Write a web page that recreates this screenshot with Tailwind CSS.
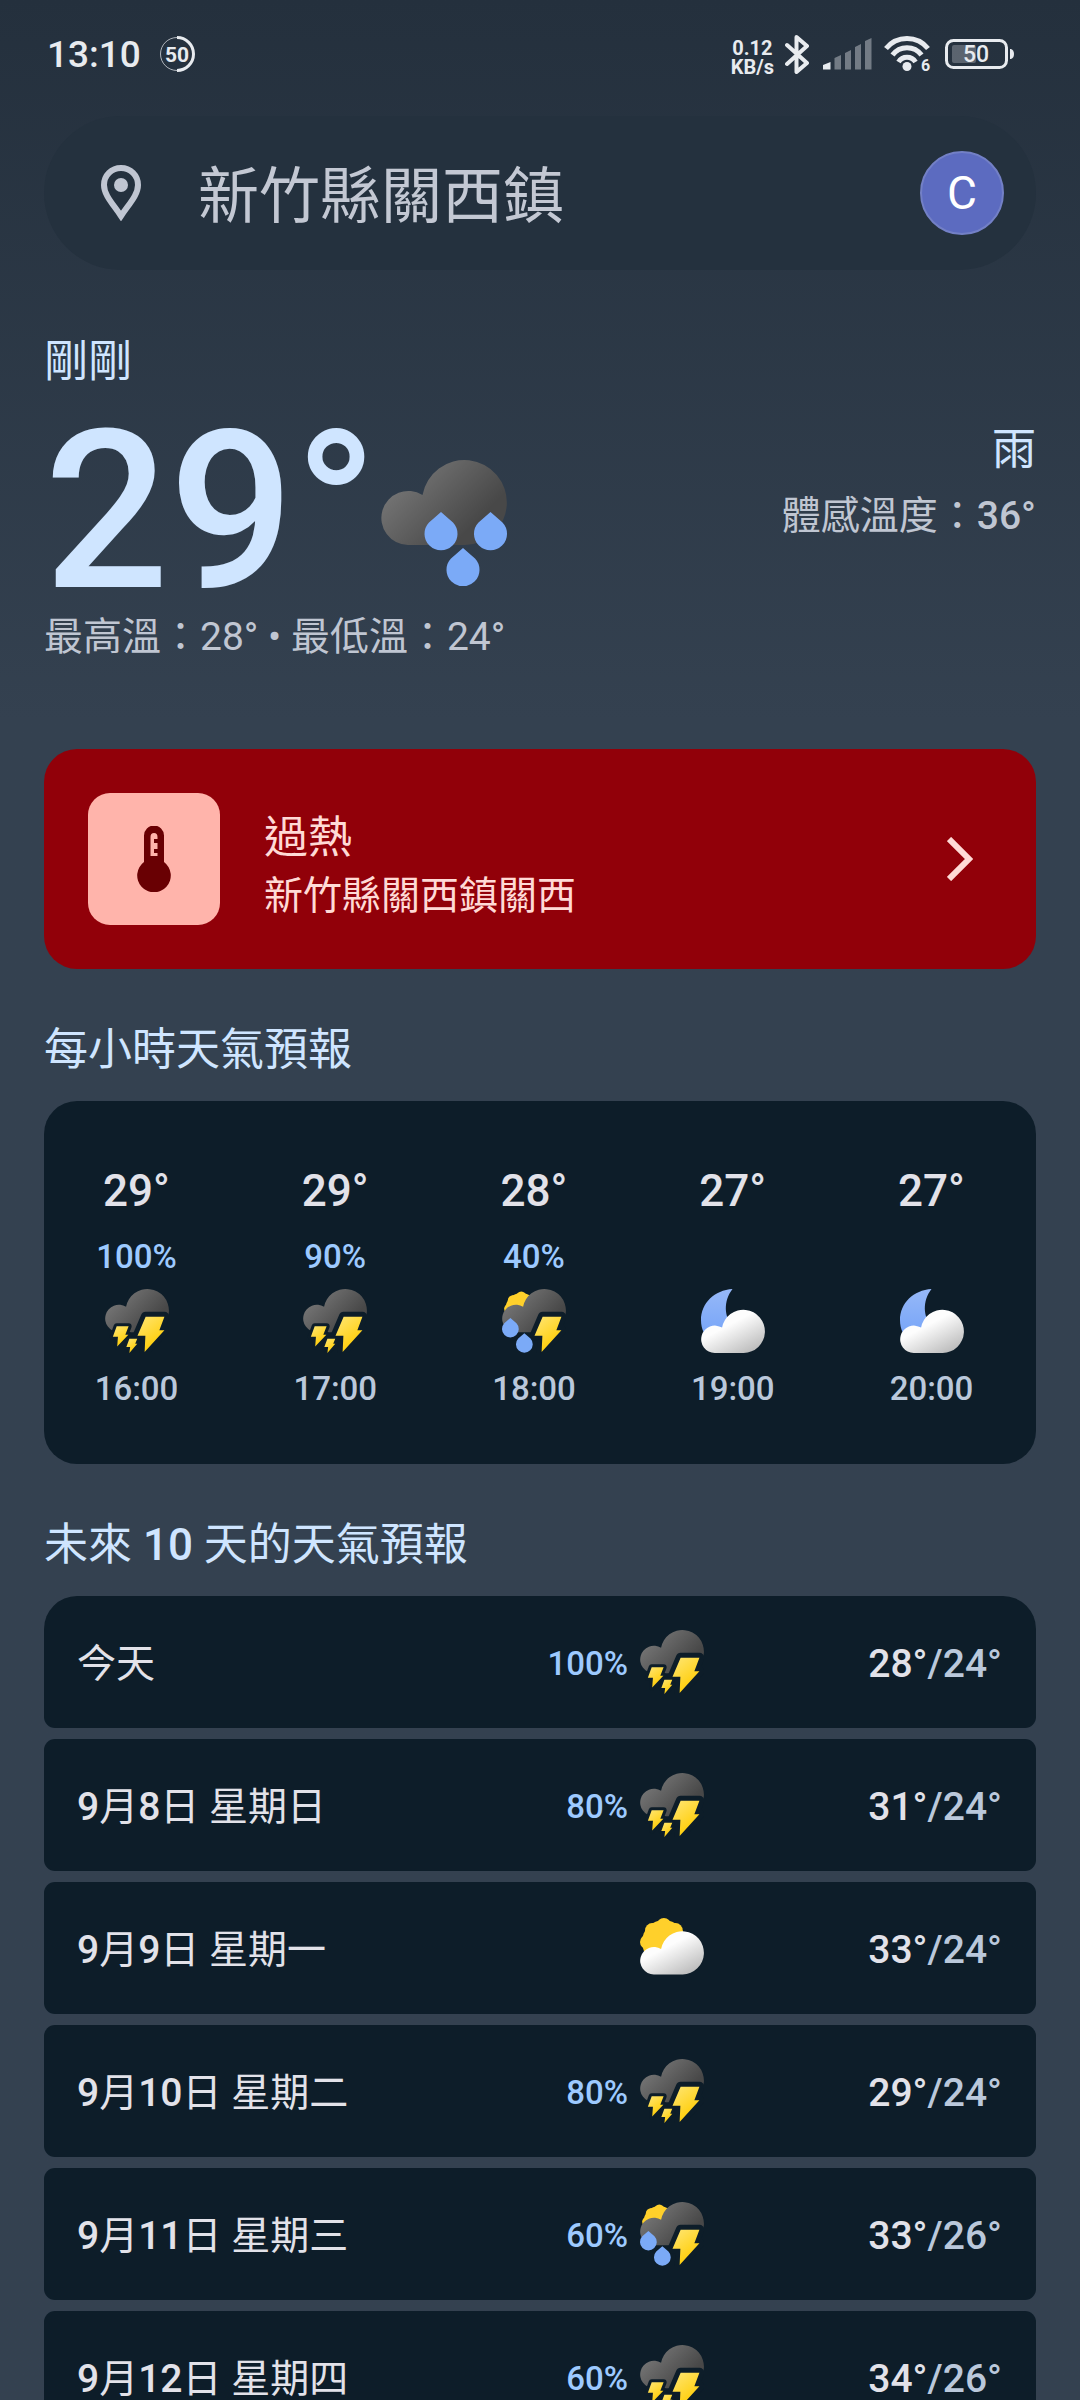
<!DOCTYPE html>
<html lang="zh-TW">
<head>
<meta charset="utf-8">
<meta name="viewport" content="width=device-width, initial-scale=1">
<title>天氣</title>
<script src="https://cdn.jsdelivr.net/npm/@tailwindcss/browser@4"></script>
</head>
<body class="h-screen overflow-hidden bg-[#344150] bg-linear-to-b from-[#24303d] from-0% to-[#344150] to-[720px] font-['Roboto','Noto_Sans_CJK_TC',sans-serif] text-[#e2e2e9]">

<!-- Shared weather artwork -->
<svg class="absolute size-0" aria-hidden="true">
  <defs>
    <linearGradient id="dark" x1="0" y1="0.3" x2="0.9" y2="0.9"><stop offset="0" stop-color="#797979"/><stop offset="0.8" stop-color="#484848"/></linearGradient>
    <linearGradient id="light" x1="0.2" y1="0.1" x2="0.9" y2="1"><stop offset="0.3" stop-color="#fdfdfd"/><stop offset="1" stop-color="#b4b4b4"/></linearGradient>
    <linearGradient id="volt" x1="0.2" y1="0" x2="0.8" y2="1"><stop offset="0" stop-color="#ffe46b"/><stop offset="0.7" stop-color="#ffd117"/></linearGradient>
    <linearGradient id="night" x1="0" y1="0" x2="0" y2="1"><stop offset="0" stop-color="#96b8f8"/><stop offset="1" stop-color="#74a3f8"/></linearGradient>
    <path id="cloud" d="M27 85A27 27 0 1 1 41.500 35A42.500 42.500 0 1 1 84 85Z"/>
    <path id="drop" fill="#7baaf7" d="M0 0L12 10.500A16.500 16.500 0 1 1 -12 10.500Z"/>
    <path id="bolt" d="M80 54.500H117L107 81H117L78 124L79.500 92H64Z"/>
    <g id="sun" fill="#ffd02b">
      <circle r="43"/><circle cy="-33" r="14"/><circle cx="23" cy="-23" r="14"/><circle cx="33" r="14"/><circle cx="23" cy="23" r="14"/><circle cy="33" r="14"/><circle cx="-23" cy="23" r="14"/><circle cx="-33" r="14"/><circle cx="-23" cy="-23" r="14"/>
    </g>
    <symbol id="rain" viewBox="0 0 126 126">
      <use href="#cloud" fill="url(#dark)"/>
      <use href="#drop" x="60" y="52"/><use href="#drop" x="109.500" y="52"/><use href="#drop" x="82" y="88"/>
    </symbol>
    <symbol id="thunder" viewBox="0 0 126 126">
      <use href="#cloud" fill="url(#dark)"/>
      <g fill="url(#volt)">
        <g stroke="#0d1d29" stroke-width="19" stroke-linejoin="round">
          <use href="#bolt"/>
        </g>
        <path d="M23 73.500H46.500L40 90H46L24 113L25.500 94H15.500Z" stroke="#0d1d29" stroke-width="12" stroke-linejoin="round"/>
        <path d="M48 98H63.500L59.500 108H63.500L48 126L49.500 114H42Z" stroke="#0d1d29" stroke-width="10" stroke-linejoin="round"/>
        <use href="#bolt"/>
        <path d="M23 73.500H46.500L40 90H46L24 113L25.500 94H15.500Z"/>
        <path d="M48 98H63.500L59.500 108H63.500L48 126L49.500 114H42Z"/>
      </g>
    </symbol>
    <symbol id="sunstorm" viewBox="0 0 126 126">
      <use href="#sun" transform="translate(38 39) scale(.72)"/>
      <use href="#cloud" fill="url(#dark)"/>
      <use href="#bolt" fill="#0d1d29" stroke="#0d1d29" stroke-width="19" stroke-linejoin="round"/>
      <use href="#bolt" fill="url(#volt)"/>
      <use href="#drop" x="16.500" y="57"/><use href="#drop" x="44" y="87"/>
    </symbol>
    <symbol id="partly" viewBox="0 0 126 126">
      <use href="#sun" x="47" y="51"/>
      <use href="#cloud" y="30" fill="url(#light)"/>
    </symbol>
    <symbol id="moon" viewBox="0 0 126 126">
      <path fill="url(#night)" d="M62 0C27 2 0 28 0 61C0 80 8 95 20 100L60 70C47 55 43 25 62 0Z"/>
      <use href="#cloud" y="41" fill="url(#light)"/>
    </symbol>
  </defs>
</svg>

<header class="flex h-[108px] items-center justify-between pl-[47px] pr-[66px] text-[#e8ebef]">
  <div class="flex items-center gap-[18px]">
    <time class="pt-[2px] text-[37px] font-medium leading-[44px]">13:10</time>
    <svg class="size-[36px]" viewBox="0 0 36 36" fill="none" stroke="currentColor">
      <circle cx="18" cy="18" r="16.500" stroke-width="1" opacity=".7"/><path d="M18 1.500A16.500 16.500 0 0 1 18 34.500" stroke-width="3"/>
      <text x="18" y="25.500" text-anchor="middle" font-size="21" font-weight="700" fill="currentColor" stroke="none">50</text>
    </svg>
  </div>
  <div class="flex items-center">
    <div class="mr-[11px] pt-[7px] text-center text-[20px] font-bold leading-[19px]"><p>0.12</p><p>KB/s</p></div>
    <svg class="mr-[14px] h-[39px] w-[24px]" viewBox="0 0 24 39" fill="none" stroke="currentColor" stroke-width="4" stroke-linejoin="round" stroke-linecap="round"><path d="M2 10L22 28L11.500 37V2L22 11L2 29"/></svg>
    <svg class="mr-[12px] h-[32px] w-[49px]" viewBox="0 0 49 32" fill="currentColor">
      <path d="M0 27L7.500 24V31.500H0Z"/>
      <path opacity=".4" d="M11.500 20L18 17V31.500H11.500ZM22 15L28 12V31.500H22ZM32 9L38 6V31.500H32ZM42 3L48.500 0V31.500H42Z"/>
    </svg>
    <svg class="mr-[12px] h-[36px] w-[49px] overflow-visible" viewBox="0 0 49 36" fill="none" stroke="currentColor" stroke-width="5">
      <path d="M2 12.500A27 27 0 0 1 44 12.500M8.500 19A18 18 0 0 1 37.500 19M14.500 26A10 10 0 0 1 31.500 26"/>
      <circle cx="23" cy="30.500" r="4.500" fill="currentColor" stroke="none"/>
      <text x="37" y="35" font-size="16" font-weight="700" fill="currentColor" stroke="none">6</text>
    </svg>
    <svg class="h-[30px] w-[69px]" viewBox="0 0 69 30">
      <rect x="1.500" y="1.500" width="60" height="27" rx="7" fill="none" stroke="currentColor" stroke-width="3"/>
      <rect x="7" y="6" width="24" height="18" rx="2" fill="currentColor" opacity=".28"/>
      <path d="M65 10H66Q69 11 69 15T66 20H65Z" fill="currentColor"/>
      <text x="31" y="23" text-anchor="middle" font-size="23" font-weight="500" fill="currentColor">50</text>
    </svg>
  </div>
</header>

<main class="px-[44px]">
  <form class="mt-[8px] flex h-[154px] items-center rounded-full bg-[#24313e] pl-[57px] pr-[32px]">
    <svg class="h-[56px] w-[40px] shrink-0 text-[#c0c6d2]" viewBox="0 0 40 56" fill="none" stroke="currentColor" stroke-width="6">
      <path d="M20 3C10.500 3 3 10.500 3 20C3 30 12 39 20 51C28 39 37 30 37 20C37 10.500 29.500 3 20 3Z"/>
      <circle cx="20" cy="20" r="7" fill="currentColor" stroke="none"/>
    </svg>
    <input type="text" aria-label="地點" value="新竹縣關西鎮" class="ml-[57px] min-w-0 flex-1 bg-transparent pt-[8px] text-[61px] leading-[90px] text-[#c3c8d3] outline-none">
    <button type="button" aria-label="帳戶" class="size-[84px] shrink-0 rounded-full border-2 border-[#7380c6] bg-[#5c6bc0] text-[46px] leading-[80px] text-white">C</button>
  </form>

  <section>
    <p class="mt-[62px] text-[44px] leading-[60px] text-[#cfe5ff]">剛剛</p>
    <div class="mt-[32px] flex items-start justify-between">
      <div class="flex items-end gap-[3px]">
        <span class="text-[220px] font-medium leading-[176px] text-[#cfe5ff]">29°</span>
        <svg class="mb-[14px] size-[126px]" role="img" aria-label="雨"><use href="#rain"/></svg>
      </div>
      <div class="text-right">
        <p class="text-[44px] leading-[52px] text-[#cfe5ff]">雨</p>
        <p class="mt-[12px] text-[39px] leading-[56px] text-[#c0c6d2]">體感溫度：<span class="font-medium">36°</span></p>
      </div>
    </div>
    <p class="mt-[9px] text-[39px] leading-[56px] text-[#c0c6d2]">最高溫：28° • 最低溫：24°</p>
  </section>

  <a href="#alert" class="mt-[84px] flex items-center rounded-[33px] bg-[#910009] p-[44px] pr-[63px] text-[#ffdad6]">
    <span class="flex size-[132px] shrink-0 items-center justify-center rounded-[22px] bg-[#ffb4ab]">
      <svg class="h-[66px] w-[34px]" viewBox="0 0 34 66"><path fill="#690003" d="M7 36V9.500A10 10 0 0 1 27 9.500V36A16.800 16.800 0 1 1 7 36Z"/><path fill="#ffb4ab" d="M13.500 30V11A3.500 4 0 0 1 20.500 11V13H17V17H20.500V23H17V27H20.500V30Z"/></svg>
    </span>
    <span class="ml-[44px] flex flex-1 flex-col pt-[14px]">
      <strong class="text-[44px] font-normal leading-[60px]">過熱</strong>
      <span class="text-[39px] leading-[56px]">新竹縣關西鎮關西</span>
    </span>
    <svg class="h-[44px] w-[26px]" viewBox="0 0 26 44" fill="none" stroke="currentColor" stroke-width="6"><path d="M2 2L22 22L2 42"/></svg>
  </a>

  <h2 class="mt-[51px] text-[44px] leading-[60px] text-[#cfe5ff]">每小時天氣預報</h2>
  <ul class="mt-[21px] flex justify-between rounded-[33px] bg-[#0d1d29] pb-[53px] pl-[21px] pr-[33px] pt-[68px] text-center text-[33px] font-medium leading-[44px] text-[#bac8db]">
    <li class="w-[143px]"><p class="text-[44px] text-[#e2e2e9]">29°</p><p class="mt-[22px] h-[44px] text-[#9dcaff]">100%</p><svg class="mx-auto mb-[14px] mt-[10px] size-[64px]"><use href="#thunder"/></svg><time>16:00</time></li>
    <li class="w-[143px]"><p class="text-[44px] text-[#e2e2e9]">29°</p><p class="mt-[22px] h-[44px] text-[#9dcaff]">90%</p><svg class="mx-auto mb-[14px] mt-[10px] size-[64px]"><use href="#thunder"/></svg><time>17:00</time></li>
    <li class="w-[143px]"><p class="text-[44px] text-[#e2e2e9]">28°</p><p class="mt-[22px] h-[44px] text-[#9dcaff]">40%</p><svg class="mx-auto mb-[14px] mt-[10px] size-[64px]"><use href="#sunstorm"/></svg><time>18:00</time></li>
    <li class="w-[143px]"><p class="text-[44px] text-[#e2e2e9]">27°</p><p class="mt-[22px] h-[44px] text-[#9dcaff]"></p><svg class="mx-auto mb-[14px] mt-[10px] size-[64px]"><use href="#moon"/></svg><time>19:00</time></li>
    <li class="w-[143px]"><p class="text-[44px] text-[#e2e2e9]">27°</p><p class="mt-[22px] h-[44px] text-[#9dcaff]"></p><svg class="mx-auto mb-[14px] mt-[10px] size-[64px]"><use href="#moon"/></svg><time>20:00</time></li>
  </ul>

  <h2 class="mt-[51px] text-[44px] leading-[60px] text-[#cfe5ff]">未來 <b class="font-medium">10</b> 天的天氣預報</h2>
  <ul class="mt-[21px] flex flex-col gap-[11px] text-[39px] leading-[56px]">
    <li><a href="#today" class="flex h-[132px] items-center rounded-[11px] rounded-t-[33px] bg-[#0d1d29] pl-[33px] pr-[34px]"><span class="flex-1 pt-[4px]">今天</span><span class="pt-[4px] text-[33px] font-medium text-[#9dcaff]">100%</span><svg class="ml-[12px] size-[64px]"><use href="#thunder"/></svg><span class="w-[298px] pt-[4px] text-right font-medium">28°<span class="text-[#bac8db]">/24°</span></span></a></li>
    <li><a href="#d8" class="flex h-[132px] items-center rounded-[11px] bg-[#0d1d29] pl-[33px] pr-[34px]"><span class="flex-1 pt-[4px]"><b class="font-medium">9</b>月<b class="font-medium">8</b>日 星期日</span><span class="pt-[4px] text-[33px] font-medium text-[#9dcaff]">80%</span><svg class="ml-[12px] size-[64px]"><use href="#thunder"/></svg><span class="w-[298px] pt-[4px] text-right font-medium">31°<span class="text-[#bac8db]">/24°</span></span></a></li>
    <li><a href="#d9" class="flex h-[132px] items-center rounded-[11px] bg-[#0d1d29] pl-[33px] pr-[34px]"><span class="flex-1 pt-[4px]"><b class="font-medium">9</b>月<b class="font-medium">9</b>日 星期一</span><svg class="ml-[12px] size-[64px]"><use href="#partly"/></svg><span class="w-[298px] pt-[4px] text-right font-medium">33°<span class="text-[#bac8db]">/24°</span></span></a></li>
    <li><a href="#d10" class="flex h-[132px] items-center rounded-[11px] bg-[#0d1d29] pl-[33px] pr-[34px]"><span class="flex-1 pt-[4px]"><b class="font-medium">9</b>月<b class="font-medium">10</b>日 星期二</span><span class="pt-[4px] text-[33px] font-medium text-[#9dcaff]">80%</span><svg class="ml-[12px] size-[64px]"><use href="#thunder"/></svg><span class="w-[298px] pt-[4px] text-right font-medium">29°<span class="text-[#bac8db]">/24°</span></span></a></li>
    <li><a href="#d11" class="flex h-[132px] items-center rounded-[11px] bg-[#0d1d29] pl-[33px] pr-[34px]"><span class="flex-1 pt-[4px]"><b class="font-medium">9</b>月<b class="font-medium">11</b>日 星期三</span><span class="pt-[4px] text-[33px] font-medium text-[#9dcaff]">60%</span><svg class="ml-[12px] size-[64px]"><use href="#sunstorm"/></svg><span class="w-[298px] pt-[4px] text-right font-medium">33°<span class="text-[#bac8db]">/26°</span></span></a></li>
    <li><a href="#d12" class="flex h-[132px] items-center rounded-[11px] bg-[#0d1d29] pl-[33px] pr-[34px]"><span class="flex-1 pt-[4px]"><b class="font-medium">9</b>月<b class="font-medium">12</b>日 星期四</span><span class="pt-[4px] text-[33px] font-medium text-[#9dcaff]">60%</span><svg class="ml-[12px] size-[64px]"><use href="#thunder"/></svg><span class="w-[298px] pt-[4px] text-right font-medium">34°<span class="text-[#bac8db]">/26°</span></span></a></li>
  </ul>
</main>
</body>
</html>
